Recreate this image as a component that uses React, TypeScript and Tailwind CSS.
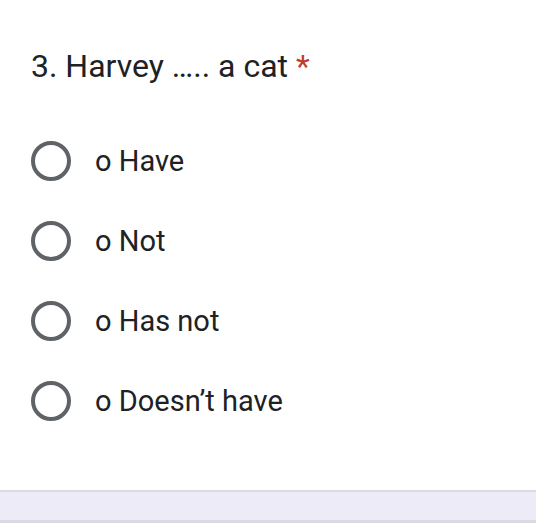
export default function App() {
  const options = ["o Have", "o Not", "o Has not", "o Doesn’t have"];
  return (
    <div
      className="w-[536px] h-[523px] bg-white flex flex-col overflow-hidden"
      style={{ fontFamily: "Roboto, 'Liberation Sans', sans-serif" }}
    >
      <div className="h-[490px] pt-[46px] pl-[31px]">
        <h1 className="text-[32px] leading-[40px] text-[#202124] font-normal">
          3. Harvey ….. a cat <span className="text-[#c5392d]">*</span>
        </h1>
        <div className="mt-[35px] flex flex-col">
          {options.map((o) => (
            <div key={o} className="h-[80px] flex items-center">
              <div className="w-[40px] h-[40px] rounded-full border-[4px] border-[#5f6368]" />
              <span className="ml-[24px] text-[29px] leading-[40px] text-[#202124]">{o}</span>
            </div>
          ))}
        </div>
      </div>
      <div className="h-[2px] bg-[#dcdae0]" />
      <div className="h-[28px] bg-[#eeebf8]" />
      <div className="h-[3px] bg-[#dcdae0]" />
    </div>
  );
}
